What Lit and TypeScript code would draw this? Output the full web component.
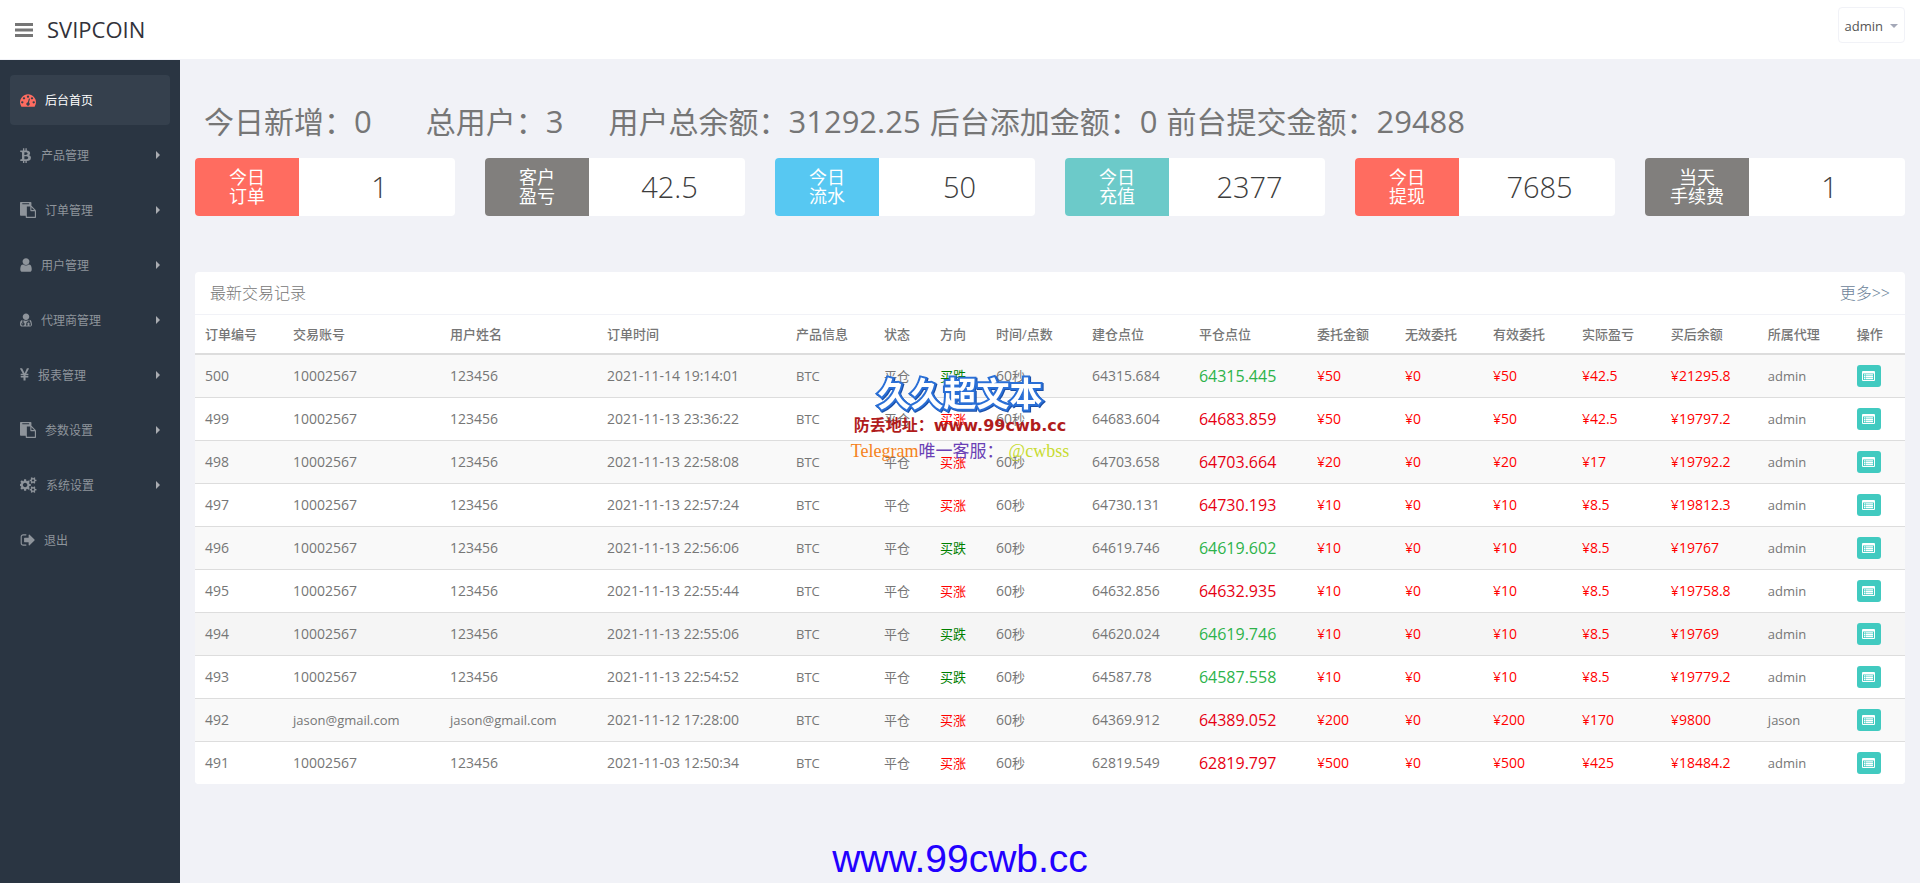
import { LitElement, html, css, svg, nothing } from "lit";
import { customElement } from "lit/decorators.js";
import { classMap } from "lit/directives/class-map.js";

type Icon = { width: number; box: string; path: string };

const icons: Record<string, Icon> = {
  bars: { width: 18, box: "0 0 18 14", path: "M0 0h18v3H0zM0 5.500h18v3H0zM0 11h18V14H0z" },
  dashboard: {
    width: 16,
    box: "0 0 1792 1792",
    path: "M384 1152q0-53-37.5-90.5t-90.5-37.5-90.5 37.5-37.5 90.5 37.5 90.5 90.5 37.5 90.5-37.5 37.5-90.5zm192-448q0-53-37.5-90.5t-90.5-37.5-90.5 37.5-37.5 90.5 37.5 90.5 90.5 37.5 90.5-37.5 37.5-90.5zm428 481l101-382q6-26-7.5-48.5t-38.5-29.5-48 6.5-30 39.5l-101 382q-60 5-107 43.5t-63 98.5q-20 77 20 146t117 89 146-20 89-117q16-60-6-117t-72-91zm660-33q0-53-37.5-90.5t-90.5-37.5-90.5 37.5-37.5 90.5 37.5 90.5 90.5 37.5 90.5-37.5 37.5-90.5zm-640-640q0-53-37.5-90.5t-90.5-37.5-90.5 37.5-37.5 90.5 37.5 90.5 90.5 37.5 90.5-37.5 37.5-90.5zm448 192q0-53-37.5-90.5t-90.5-37.5-90.5 37.5-37.5 90.5 37.5 90.5 90.5 37.5 90.5-37.5 37.5-90.5zm320 448q0 261-141 483-19 29-54 29h-1402q-35 0-54-29-141-221-141-483 0-182 71-348t191-286 286-191 348-71 348 71 286 191 191 286 71 348z",
  },
  bitcoin: {
    width: 12,
    box: "310 0 1180 1792",
    path: "M1360 663q18 182-131 258 117 28 175 103t45 214q-7 71-32.5 125t-64.5 89-97 58.5-121.5 34.5-145.5 15v255h-154v-251q-80 0-122-1v252h-154v-255q-18 0-54-.5t-55-.5h-200l31-183h111q50 0 58-51v-402h16q-6-1-16-1v-287q-13-68-89-68h-111v-164l212 1q64 0 97-1v-252h154v247q82-2 122-2v-245h154v252q79 7 140 22.5t113 45 82.5 78 36.5 114.5zm-215 545q0-36-15-64t-37-46-57.5-30.5-65.5-18.5-74-9-69-3-64.5 1-47.5 1v338q8 0 37 .5t48 .5 53-1.5 58.5-4 57-8.5 55.5-14 47.5-21 39.5-30 24.5-40 9.5-51zm-71-476q0-33-12.5-58.5t-30.5-42-48-28-55-16.5-61.5-8-58-2.5-54 1-39.5.5v307q5 0 34.5.5t46.5 0 50-2 55-5.5 51.5-11 48.5-18.5 37-27 27-38.5 9-51z",
  },
  paste: {
    width: 16,
    box: "0 0 1792 1792",
    path: "M768 1664h896v-640h-416q-40 0-68-28t-28-68v-416h-384v1152zm256-1440v-64q0-13-9.5-22.5t-22.5-9.5h-704q-13 0-22.5 9.5t-9.5 22.5v64q0 13 9.5 22.5t22.5 9.5h704q13 0 22.5-9.5t9.5-22.5zm256 672h299l-299-299v299zm512 128v672q0 40-28 68t-68 28h-960q-40 0-68-28t-28-68v-160h-544q-40 0-68-28t-28-68v-1344q0-40 28-68t68-28h1088q40 0 68 28t28 68v328q21 13 36 28l408 408q28 28 48 76t20 88z",
  },
  user: {
    width: 12,
    box: "256 0 1280 1792",
    path: "M1536 1399q0 109-62.5 187t-150.5 78h-854q-88 0-150.5-78t-62.5-187q0-85 8.5-160.5t31.5-152 58.5-131 94-89 134.5-34.5q131 128 313 128t313-128q76 0 134.5 34.5t94 89 58.5 131 31.5 152 8.5 160.5zm-256-887q0 159-112.5 271.5t-271.5 112.5-271.5-112.5-112.5-271.5 112.5-271.5 271.5-112.5 271.5 112.5 112.5 271.5z",
  },
  agent: {
    width: 12,
    box: "0 0 1408 1792",
    path: "M1088 512q0 159-112.5 271.5T704 896 432.5 783.500 320 512t112.500-271.500T704 128t271.500 112.500T1088 512zM384 1344a64 64 0 1 0-128 0 64 64 0 0 0 128 0zM1408 1405q0 121-73 190t-194 69H267q-121 0-194-69T0 1405q0-68 5.500-131T29.500 1138t53-129T170 912t134-48q-22 52-22 120v203q-58 20-93 70t-35 111q0 80 56 136t136 56 136-56 56-136q0-61-35.500-111T410 1187V984q0-62 25-93 132 104 269 104t269-104q25 31 25 93v64q-106 0-181 75t-75 181v89q-32 29-32 71 0 40 28 68t68 28 68-28 28-68q0-42-32-71v-89q0-52 38-90t90-38 90 38 38 90v89q-32 29-32 71 0 40 28 68t68 28 68-28 28-68q0-42-32-71v-89q0-68-34.500-127.500T1126 1082q0-10 .5-42.500t0-48-2.500-41.500-7-47-13-40q88 20 147 75t86 134 35.500 150 35.500 183z",
  },
  yen: {
    width: 9,
    box: "382 0 1030 1792",
    path: "M985.500 1536h-172q-13 0-22.500-9t-9.500-23v-330h-288q-13 0-22.500-9t-9.500-23v-103q0-13 9.500-22.500t22.500-9.500h288v-85h-288q-13 0-22.500-9t-9.500-23v-104q0-13 9.500-22.500t22.500-9.500h214l-321-578q-8-16 0-32 10-16 28-16h194q19 0 29 18l215 425q19 38 56 125 10-24 30.500-68t27.500-61l191-420q8-19 29-19h191q17 0 27 16 9 14 1 31l-313 579h215q13 0 22.500 9.500t9.500 22.500v104q0 14-9.500 23t-22.500 9h-290v85h290q13 0 22.500 9.500t9.500 22.500v103q0 14-9.500 23t-22.500 9h-290v330q0 13-9.500 22.500t-22.500 9.500z",
  },
  cogs: {
    width: 17,
    box: "0 0 1920 1792",
    path: "M832 896q0-106-75-181t-181-75-181 75-75 181 75 181 181 75 181-75 75-181zm768 512q0-52-38-90t-90-38-90 38-38 90q0 53 37.500 90.500t90.500 37.500 90.500-37.500 37.500-90.500zm0-1024q0-52-38-90t-90-38-90 38-38 90q0 53 37.500 90.500t90.500 37.500 90.500-37.500 37.500-90.500zm-384 421v185q0 10-7 19.500t-16 10.500l-155 24q-11 35-32 76 34 48 90 115 7 11 7 20 0 12-7 19-23 30-82.500 89.500t-78.500 59.500q-11 0-21-7l-115-90q-37 19-77 31-11 108-23 155-7 24-30 24h-186q-11 0-20-7.500t-10-17.500l-23-153q-34-10-75-31l-118 89q-7 7-20 7-11 0-21-8-144-133-144-160 0-9 7-19 10-14 41-53t47-61q-23-44-35-82l-152-24q-10-1-17-9.500t-7-19.500v-185q0-10 7-19.500t16-10.500l155-24q11-35 32-76-34-48-90-115-7-11-7-20 0-12 7-20 22-30 82-89t79-59q11 0 21 7l115 90q34-18 77-32 11-108 23-154 7-24 30-24h186q11 0 20 7.500t10 17.500l23 153q34 10 75 31l118-89q8-7 20-7 11 0 21 8 144 133 144 160 0 8-7 19-12 16-42 54t-45 60q23 48 34 82l152 23q10 2 17 10.500t7 19.500zm640 533v140q0 16-149 31-12 27-30 52 51 113 51 138 0 4-4 7-122 71-124 71-8 0-46-47t-52-68q-20 2-30 2t-30-2q-14 21-52 68t-46 47q-2 0-124-71-4-3-4-7 0-25 51-138-18-25-30-52-149-15-149-31v-140q0-16 149-31 13-29 30-52-51-113-51-138 0-4 4-7 4-2 35-20t59-34 30-16q8 0 46 46.500t52 67.500q20-2 30-2t30 2q51-71 92-112l6-2q4 0 124 70 4 3 4 7 0 25-51 138 17 23 30 52 149 15 149 31zm0-1024v140q0 16-149 31-12 27-30 52 51 113 51 138 0 4-4 7-122 71-124 71-8 0-46-47t-52-68q-20 2-30 2t-30-2q-14 21-52 68t-46 47q-2 0-124-71-4-3-4-7 0-25 51-138-18-25-30-52-149-15-149-31v-140q0-16 149-31 13-29 30-52-51-113-51-138 0-4 4-7 4-2 35-20t59-34 30-16q8 0 46 46.500t52 67.500q20-2 30-2t30 2q51-71 92-112l6-2q4 0 124 70 4 3 4 7 0 25-51 138 17 23 30 52 149 15 149 31z",
  },
  signOut: {
    width: 15,
    box: "0 0 1664 1792",
    path: "M704 1440q0 4 1 20t.5 26.500-3 23.500-10 19.500-20.500 6.500h-320q-119 0-203.500-84.500t-84.500-203.500v-704q0-119 84.500-203.500t203.500-84.500h320q13 0 22.500 9.500t9.500 22.500q0 4 1 20t.5 26.500-3 23.500-10 19.500-20.500 6.500h-320q-66 0-113 47t-47 113v704q0 66 47 113t113 47h312l11.500 1 11.500 3 8 5.500 7 9 2 13.500zm928-544q0 26-19 45l-544 544q-19 19-45 19t-45-19-19-45v-288h-448q-26 0-45-19t-19-45v-384q0-26 19-45t45-19h448v-288q0-26 19-45t45-19 45 19l544 544q19 19 19 45z",
  },
  detail: {
    width: 13,
    box: "0 0 13 10",
    path: "M1 0h11q1 0 1 1v8q0 1-1 1H1q-1 0-1-1V1q0-1 1-1zM1 2.500V9h11V2.500zM2 3.200h1.500v1.300H2zM4 3.200h7v1.300H4zM2 5.100h1.500v1.300H2zM4 5.100h7v1.300H4zM2 7h1.500v1.300H2zM4 7h7v1.300H4z",
  },
};

const drawIcon = (name: string, height = 16) => {
  const icon = icons[name];
  return html`<svg class="icon" width=${icon.width} height=${height} viewBox=${icon.box} aria-hidden="true">
    ${svg`<path fill="currentColor" fill-rule="evenodd" d=${icon.path}></path>`}
  </svg>`;
};

const menu = [
  { icon: "dashboard", text: "后台首页", active: true, more: false },
  { icon: "bitcoin", text: "产品管理", active: false, more: true },
  { icon: "paste", text: "订单管理", active: false, more: true },
  { icon: "user", text: "用户管理", active: false, more: true },
  { icon: "agent", text: "代理商管理", active: false, more: true },
  { icon: "yen", text: "报表管理", active: false, more: true },
  { icon: "paste", text: "参数设置", active: false, more: true },
  { icon: "cogs", text: "系统设置", active: false, more: true },
  { icon: "signOut", text: "退出", active: false, more: false },
];

const totals = [
  { label: "今日新增：", value: "0", gap: "far" },
  { label: "总用户：", value: "3", gap: "near" },
  { label: "用户总余额：", value: "31292.25", gap: "" },
  { label: "后台添加金额：", value: "0", gap: "" },
  { label: "前台提交金额：", value: "29488", gap: "" },
];

const cards = [
  { lines: ["今日", "订单"], value: "1", tone: "red" },
  { lines: ["客户", "盈亏"], value: "42.5", tone: "gray" },
  { lines: ["今日", "流水"], value: "50", tone: "blue" },
  { lines: ["今日", "充值"], value: "2377", tone: "teal" },
  { lines: ["今日", "提现"], value: "7685", tone: "red" },
  { lines: ["当天", "手续费"], value: "1", tone: "gray" },
];

const columns: [string, number][] = [
  ["订单编号", 88],
  ["交易账号", 157],
  ["用户姓名", 157],
  ["订单时间", 189],
  ["产品信息", 88],
  ["状态", 56],
  ["方向", 56],
  ["时间/点数", 96],
  ["建仓点位", 107],
  ["平仓点位", 118],
  ["委托金额", 88],
  ["无效委托", 88],
  ["有效委托", 89],
  ["实际盈亏", 89],
  ["买后余额", 97],
  ["所属代理", 89],
  ["操作", 58],
];
const columnTotal = columns.reduce((sum, column) => sum + column[1], 0);

type Order = {
  id: string;
  account: string;
  name: string;
  time: string;
  up: boolean;
  open: string;
  close: string;
  gain: boolean;
  amount: string;
  profit: string;
  balance: string;
  agent: string;
};

const order = (
  id: string, account: string, name: string, time: string, up: boolean, open: string,
  close: string, gain: boolean, amount: string, profit: string, balance: string, agent: string,
): Order => ({ id, account, name, time, up, open, close, gain, amount, profit, balance, agent });

const orders: Order[] = [
  order("500", "10002567", "123456", "2021-11-14 19:14:01", false, "64315.684", "64315.445", false, "50", "42.5", "21295.8", "admin"),
  order("499", "10002567", "123456", "2021-11-13 23:36:22", true, "64683.604", "64683.859", true, "50", "42.5", "19797.2", "admin"),
  order("498", "10002567", "123456", "2021-11-13 22:58:08", true, "64703.658", "64703.664", true, "20", "17", "19792.2", "admin"),
  order("497", "10002567", "123456", "2021-11-13 22:57:24", true, "64730.131", "64730.193", true, "10", "8.5", "19812.3", "admin"),
  order("496", "10002567", "123456", "2021-11-13 22:56:06", false, "64619.746", "64619.602", false, "10", "8.5", "19767", "admin"),
  order("495", "10002567", "123456", "2021-11-13 22:55:44", true, "64632.856", "64632.935", true, "10", "8.5", "19758.8", "admin"),
  order("494", "10002567", "123456", "2021-11-13 22:55:06", false, "64620.024", "64619.746", false, "10", "8.5", "19769", "admin"),
  order("493", "10002567", "123456", "2021-11-13 22:54:52", false, "64587.78", "64587.558", false, "10", "8.5", "19779.2", "admin"),
  order("492", "jason@gmail.com", "jason@gmail.com", "2021-11-12 17:28:00", true, "64369.912", "64389.052", true, "200", "170", "9800", "jason"),
  order("491", "10002567", "123456", "2021-11-03 12:50:34", true, "62819.549", "62819.797", true, "500", "425", "18484.2", "admin"),
];

const isNumber = (text: string) => /^\d+$/.test(text);

@customElement("app-root")
export class AppRoot extends LitElement {
  static styles = css`
    :host {
      display: flex;
      flex-direction: column;
      position: relative;
      min-height: 100vh;
      background: #f1f2f7;
      color: #767676;
      font: 13px/18px "Open Sans", "Noto Sans CJK SC", sans-serif;
    }
    * {
      box-sizing: border-box;
    }
    a {
      color: inherit;
      text-decoration: none;
    }
    button {
      font: inherit;
      border: 0;
      margin: 0;
      cursor: pointer;
    }
    .icon {
      display: block;
      flex: none;
    }
    .top {
      display: flex;
      align-items: center;
      min-height: 59px;
      padding: 0 15px;
      background: #fff;
    }
    .toggle {
      padding: 0;
      background: none;
      color: #767676;
    }
    .brand {
      margin-left: 14px;
      padding-bottom: 2px;
      color: #32323a;
      font-size: 22px;
      line-height: 30px;
    }
    .account {
      display: flex;
      align-items: center;
      align-self: flex-start;
      gap: 7px;
      height: 36px;
      margin: 7px 0 0 auto;
      padding: 1px 6px 0;
      border: 1px solid #f1f2f7;
      border-radius: 4px;
      background: #fff;
      color: #555;
    }
    .caret {
      border: 4px solid transparent;
      border-top-color: #a4a8b8;
      border-bottom: 0;
    }
    .body {
      display: flex;
      flex: 1;
    }
    .side {
      flex: none;
      width: 180px;
      margin-top: 1px;
      padding: 15px 10px;
      background: #2a3542;
      font-size: 12px;
    }
    .menu {
      display: grid;
      gap: 5px;
      margin: 0;
      padding: 0;
      list-style: none;
    }
    .item {
      display: flex;
      align-items: center;
      gap: 9px;
      height: 50px;
      padding: 0 10px;
      border-radius: 4px;
      color: #8e949b;
    }
    .item.active {
      background: #35404d;
      color: #fff;
    }
    .active .icon {
      color: #ff6c60;
    }
    .name {
      padding-top: 2px;
    }
    .arrow {
      margin-left: auto;
      border: 4px solid transparent;
      border-left-color: #a9acb1;
      border-right: 0;
    }
    .main {
      flex: 1;
      min-width: 0;
      padding: 38px 15px 0;
    }
    .totals {
      display: flex;
      flex-wrap: wrap;
      gap: 0 9px;
      margin: 0 9px 12px;
      font-size: 30px;
      line-height: 48px;
    }
    .far {
      margin-right: 45px;
    }
    .near {
      margin-right: 36px;
    }
    .figure {
      font-size: 31px;
    }
    .cards {
      display: grid;
      grid-template-columns: repeat(6, 1fr);
      gap: 30px;
    }
    .card {
      display: grid;
      grid-template-columns: 2fr 3fr;
      align-items: center;
      height: 58px;
      border-radius: 4px;
      overflow: hidden;
      background: #fff;
      text-align: center;
    }
    .tag {
      display: grid;
      align-content: center;
      height: 100%;
      color: #fff;
      font-size: 18px;
      line-height: 19px;
    }
    .red {
      background: #ff6c60;
    }
    .gray {
      background: #817f7d;
    }
    .blue {
      background: #57c8f2;
    }
    .teal {
      background: #6ccac9;
    }
    .value {
      padding-left: 5px;
      color: #3c3c3c;
      font-size: 29px;
      font-weight: 300;
      line-height: 40px;
    }
    .panel {
      margin-top: 56px;
      border-radius: 4px;
      overflow: hidden;
      background: #fff;
    }
    .heading {
      display: flex;
      justify-content: space-between;
      align-items: center;
      height: 43px;
      padding: 0 15px;
      border-bottom: 1px solid #f1f2f7;
      font-size: 16px;
      font-weight: 300;
    }
    .title {
      margin: 0;
      font: inherit;
    }
    .link {
      color: #6b8299;
    }
    table {
      width: 100%;
      table-layout: fixed;
      border-collapse: separate;
      border-spacing: 0;
    }
    th,
    td {
      padding: 0 0 0 10px;
      text-align: left;
      white-space: nowrap;
    }
    th {
      height: 40px;
      border-bottom: 2px solid #ddd;
      font-weight: 500;
    }
    td {
      height: 43px;
      border-bottom: 1px solid #ddd;
    }
    tr:last-child td {
      height: 42px;
      border-bottom: 0;
    }
    tr:nth-child(odd) td {
      background: #f9f9f9;
    }
    thead th,
    tbody tr:nth-child(even) td {
      background: #fff;
    }
    tbody tr.current td {
      background: #f5f5f5;
    }
    .num {
      font-size: 14px;
    }
    .price {
      font-size: 16px;
    }
    .rise {
      color: red;
    }
    .fall {
      color: green;
    }
    .gain {
      color: #e60012;
    }
    .loss {
      color: #2db34a;
    }
    .open {
      display: grid;
      place-items: center;
      width: 24px;
      height: 22px;
      padding: 0;
      border-radius: 3px;
      background: #41cac0;
      color: #fff;
    }
    .stamp {
      position: absolute;
      top: 373px;
      left: 0;
      right: 0;
      text-align: center;
      pointer-events: none;
    }
    .stamp-name {
      color: #fff;
      font-size: 33px;
      font-weight: 700;
      line-height: 42px;
      -webkit-text-stroke: 4px #2a6fd6;
      paint-order: stroke fill;
      filter: drop-shadow(1px 1px 0 #1a4fa8);
    }
    .stamp-site {
      color: #b01c1c;
      font: 700 16px/22px "DejaVu Sans", "Noto Sans CJK SC", sans-serif;
    }
    .stamp-contact {
      font: 18px/28px "Liberation Serif", "Noto Sans CJK SC", serif;
    }
    .orange {
      color: #f58220;
    }
    .purple {
      color: #6a3fb5;
      font-size: 17px;
    }
    .lime {
      margin-left: 5px;
      color: #c8dc32;
    }
    .site {
      position: absolute;
      left: 0;
      right: 0;
      bottom: 2px;
      text-align: center;
      color: #20f;
      font: 39px/44px "Liberation Sans", sans-serif;
      pointer-events: none;
    }
  `;

  private renderText(text: string) {
    return html`<td class=${isNumber(text) ? "num" : nothing}>${text}</td>`;
  }

  private renderOrder(row: Order) {
    return html`<tr class=${row.id === "494" ? "current" : nothing}>
      <td class="num">${row.id}</td>
      ${this.renderText(row.account)} ${this.renderText(row.name)}
      <td class="num">${row.time}</td>
      <td>BTC</td>
      <td>平仓</td>
      <td class=${row.up ? "rise" : "fall"}>${row.up ? "买涨" : "买跌"}</td>
      <td><span class="num">60</span>秒</td>
      <td class="num">${row.open}</td>
      <td class="price ${row.gain ? "gain" : "loss"}">${row.close}</td>
      <td class="num rise">¥${row.amount}</td>
      <td class="num rise">¥0</td>
      <td class="num rise">¥${row.amount}</td>
      <td class="num rise">¥${row.profit}</td>
      <td class="num rise">¥${row.balance}</td>
      <td>${row.agent}</td>
      <td><button class="open" aria-label="订单 ${row.id}">${drawIcon("detail", 10)}</button></td>
    </tr>`;
  }

  render() {
    return html`
      <header class="top">
        <button class="toggle" aria-label="菜单">${drawIcon("bars", 14)}</button>
        <a class="brand" href="#">SVIPCOIN</a>
        <button class="account">admin<span class="caret"></span></button>
      </header>
      <div class="body">
        <nav class="side">
          <ul class="menu">
            ${menu.map(
              (entry) => html`<li>
                <a class=${classMap({ item: true, active: entry.active })} href="#">
                  ${drawIcon(entry.icon)}<span class="name">${entry.text}</span>
                  ${entry.more ? html`<span class="arrow"></span>` : nothing}
                </a>
              </li>`,
            )}
          </ul>
        </nav>
        <main class="main">
          <div class="totals">
            ${totals.map(
              (entry) => html`<div class="total ${entry.gap}">
                ${entry.label}<span class="figure">${entry.value}</span>
              </div>`,
            )}
          </div>
          <div class="cards">
            ${cards.map(
              (card) => html`<section class="card">
                <div class="tag ${card.tone}">${card.lines.map((line) => html`<span>${line}</span>`)}</div>
                <div class="value">${card.value}</div>
              </section>`,
            )}
          </div>
          <section class="panel">
            <div class="heading">
              <h2 class="title">最新交易记录</h2>
              <a class="link" href="#">更多&gt;&gt;</a>
            </div>
            <table>
              <colgroup>
                ${columns.map((column) => html`<col style="width:${(column[1] / columnTotal) * 100}%" />`)}
              </colgroup>
              <thead>
                <tr>
                  ${columns.map((column) => html`<th scope="col">${column[0]}</th>`)}
                </tr>
              </thead>
              <tbody>
                ${orders.map((row) => this.renderOrder(row))}
              </tbody>
            </table>
          </section>
        </main>
      </div>
      <div class="stamp">
        <div class="stamp-name">久久超文本</div>
        <div class="stamp-site">防丢地址：www.99cwb.cc</div>
        <div class="stamp-contact">
          <span class="orange">Telegram</span><span class="purple">唯一客服：</span><span class="lime">@cwbss</span>
        </div>
      </div>
      <div class="site">www.99cwb.cc</div>
    `;
  }
}
